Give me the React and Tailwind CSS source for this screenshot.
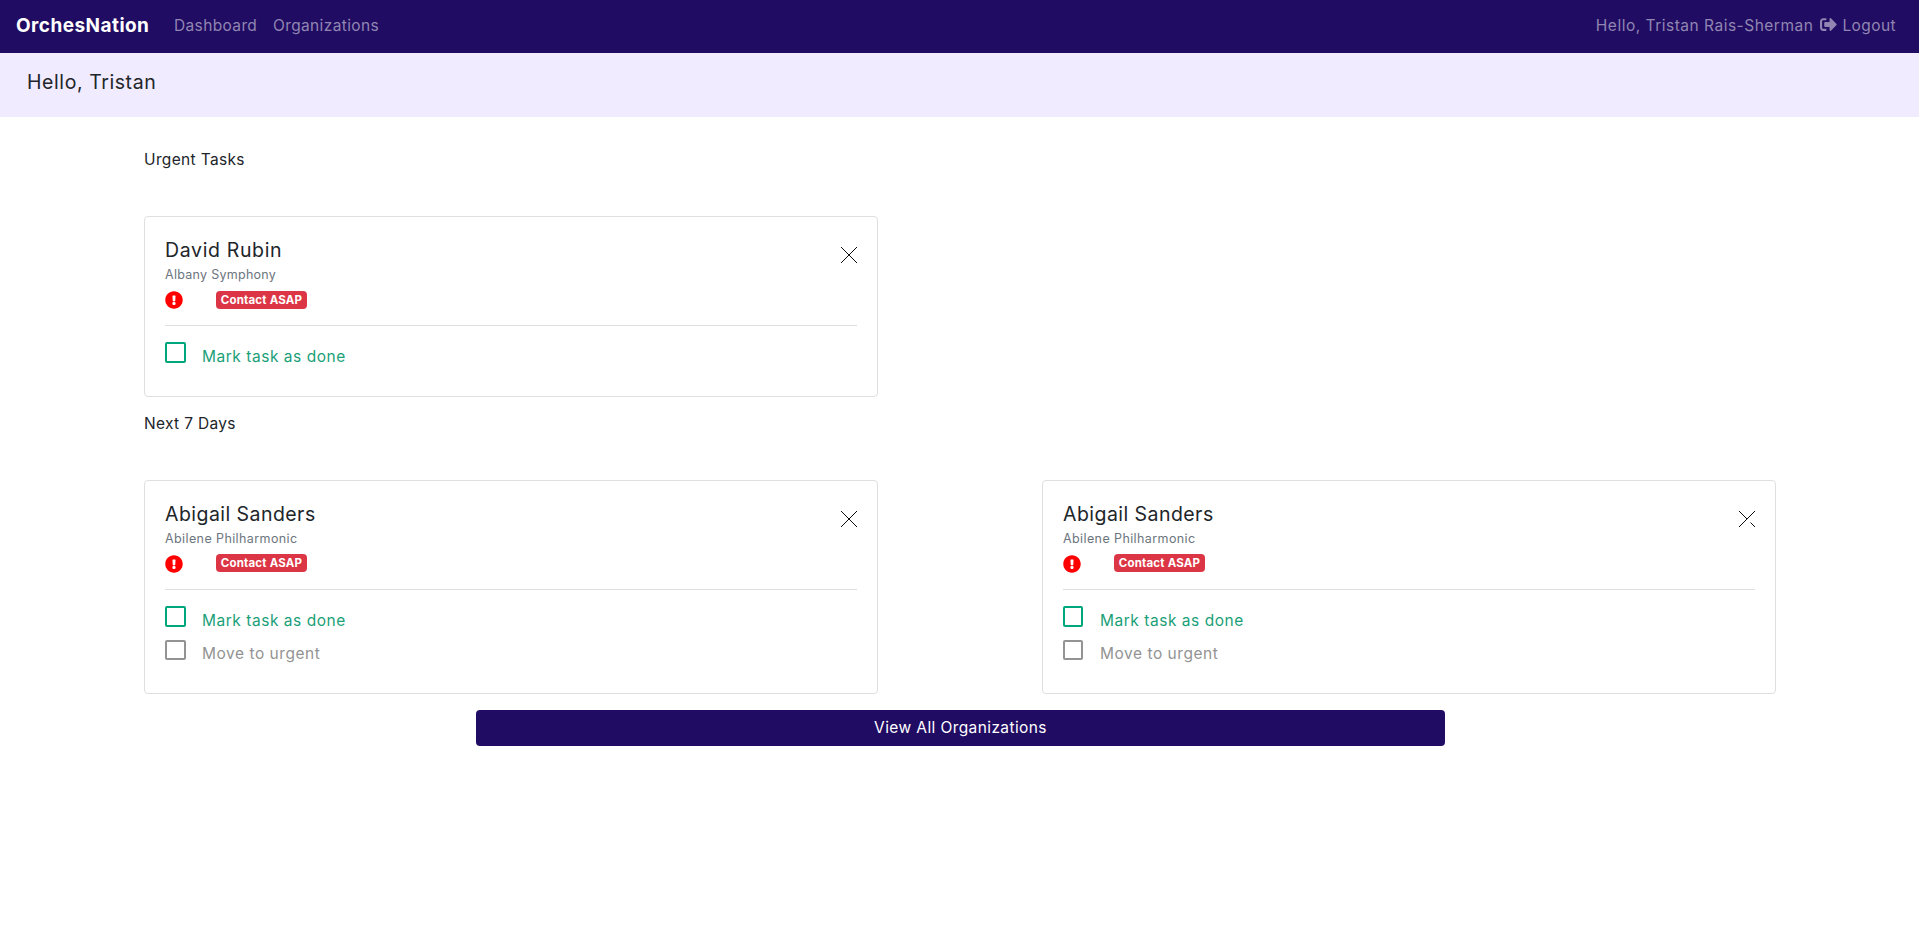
import { FaExclamationCircle, FaSignOutAlt } from "react-icons/fa";

function CloseIcon({ clipped }) {
  return (
    <svg width="16" height="16" viewBox="0 0 16 16" fill="none" stroke="#000" strokeWidth="0.95">
      <path d={clipped ? "M0 0L8 8M11.5 11.5L16 16M16 0L0 16" : "M0 0L16 16M16 0L0 16"} />
    </svg>
  );
}

function TaskCard({ name, nameClass, org, orgClass, badgeClass = "", boxClass = "w-[21px]", movable, clipped }) {
  return (
    <article
      className={`w-[734px] rounded border border-[#dfdfdf] px-5 pt-5 ${movable ? "h-[214px]" : "h-[181px]"}`}
    >
      <div className="flex justify-between">
        <div>
          <h2 className={`h-6 whitespace-nowrap text-[19.5px] leading-[26px] text-[#212529] ${nameClass}`}>{name}</h2>
          <p className={`mt-[5px] h-[18px] whitespace-nowrap text-[12.5px] leading-[18px] text-[#6c757d] ${orgClass}`}>{org}</p>
        </div>
        <button className="mt-[10px] h-4 w-4" aria-label="Dismiss">
          <CloseIcon clipped={clipped} />
        </button>
      </div>
      <div className="mt-[7px] flex h-[18px] gap-[33px]">
        <FaExclamationCircle size={18} color="#ff0000" />
        <span
          className={`flex h-[18px] w-[91px] items-center justify-center whitespace-nowrap rounded bg-[#dc3545] text-[11.5px] leading-[18px] font-bold tracking-[0.2px] text-white ${badgeClass}`}
        >
          Contact ASAP
        </span>
      </div>
      <hr className="mt-4 border-[#e0e0e0]" />
      <label className="mt-4 flex items-start gap-4">
        <span className={`h-[21px] rounded-[2px] border-2 border-[#00a67c] ${boxClass}`} />
        <span className="mt-1 h-5 text-[15.5px] leading-[22px] tracking-[0.53px] text-[#1a9f78]">Mark task as done</span>
      </label>
      {movable && (
        <label className="mt-[10px] flex items-start gap-4">
          <span className={`h-5 rounded-[2px] border-2 border-[#939393] ${boxClass}`} />
          <span className="mt-[3px] h-5 text-[15.5px] leading-[22px] tracking-[0.53px] text-[#939393]">Move to urgent</span>
        </label>
      )}
    </article>
  );
}

export default function App() {
  return (
    <div className="min-h-screen bg-white font-['Inter',sans-serif] text-[15.5px] text-[#212529]">
      <nav className="flex h-[53px] items-start bg-[#210c64] pr-[23px] pl-4 leading-[22px] whitespace-nowrap text-[#9086b1]">
        <a className="mt-[15px] w-[158px] text-[19px] font-bold tracking-[0.45px] text-white">OrchesNation</a>
        <a className="mt-[15px] w-[99px] tracking-[0.36px]">Dashboard</a>
        <a className="mt-[15px] tracking-[0.36px]">Organizations</a>
        <span className="mt-[15px] ml-auto tracking-[0.5px]">Hello, Tristan Rais-Sherman</span>
        <a className="mt-[15px] ml-[7px] flex items-center gap-[5px] tracking-[0.42px]">
          <FaSignOutAlt size={17} className="-mt-1" />
          Logout
        </a>
      </nav>
      <header className="h-16 bg-[#f0ebfe] pt-4 pl-[27px]">
        <h1 className="text-[19.5px] leading-[26px] tracking-[0.58px]">Hello, Tristan</h1>
      </header>
      <main className="pl-36">
        <h3 className="h-[52px] pt-8 text-[15.5px] leading-[22px] tracking-[0.35px]">Urgent Tasks</h3>
        <section className="mt-[47px]">
          <TaskCard name="David Rubin" nameClass="tracking-[0.65px]" org="Albany Symphony" orgClass="tracking-[0.28px]" />
        </section>
        <h3 className="mt-4 h-5 text-[15.5px] leading-[22px] tracking-[0.32px]">Next 7 Days</h3>
        <section className="mt-[47px] flex gap-[164px]">
          <TaskCard
            name="Abigail Sanders"
            nameClass="tracking-[0.45px]"
            org="Abilene Philharmonic"
            orgClass="tracking-[0.4px]"
            badgeClass="-mt-px"
            movable
          />
          <TaskCard
            name="Abigail Sanders"
            nameClass="tracking-[0.45px]"
            org="Abilene Philharmonic"
            orgClass="tracking-[0.4px]"
            badgeClass="-mt-px"
            boxClass="w-5 mr-px"
            movable
            clipped
          />
        </section>
        <button className="mt-4 ml-[332px] flex h-9 w-[969px] items-center justify-center rounded bg-[#210c64] tracking-[0.4px] text-white">
          View All Organizations
        </button>
      </main>
    </div>
  );
}
